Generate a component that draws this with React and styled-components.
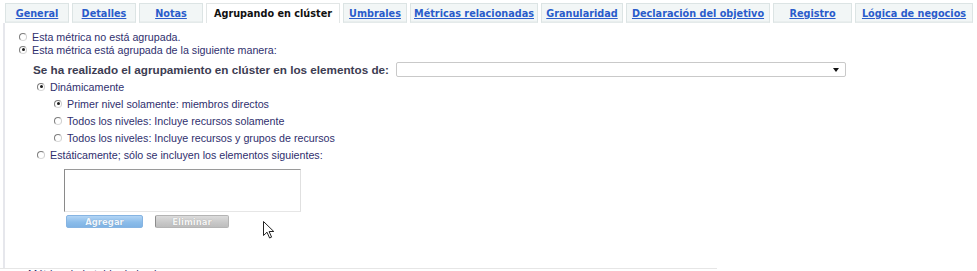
import React from 'react';
import styled, { createGlobalStyle } from 'styled-components';

const GlobalStyle = createGlobalStyle`
  body {
    margin: 0;
    background: #fff;
    font-family: "Liberation Sans", Arial, sans-serif;
  }
`;

const tabs = [
  { label: 'General', width: 64 },
  { label: 'Detalles', width: 64 },
  { label: 'Notas', width: 64 },
  { label: 'Agrupando en clúster', width: 134, active: true },
  { label: 'Umbrales', width: 64 },
  { label: 'Métricas relacionadas', width: 128 },
  { label: 'Granularidad', width: 82 },
  { label: 'Declaración del objetivo', width: 144 },
  { label: 'Registro', width: 79 },
  { label: 'Lógica de negocios', width: 118 },
];

const levels = [
  { label: 'Primer nivel solamente: miembros directos', checked: true },
  { label: 'Todos los niveles: Incluye recursos solamente' },
  { label: 'Todos los niveles: Incluye recursos y grupos de recursos' },
];

const Page = styled.div`
  position: relative;
  width: 977px;
  height: 271px;
  overflow: hidden;
`;

const TabBar = styled.div`
  display: flex;
  gap: 3px;
  padding: 3px 0 0 5px;
  height: 20px;
`;

const Tab = styled.div`
  box-sizing: border-box;
  width: ${p => p.width}px;
  height: 20px;
  display: flex;
  align-items: center;
  justify-content: center;
  border: 1px solid ${p => (p.active ? '#e2e6e6' : '#dce4e4')};
  border-bottom: ${p => (p.active ? 'none' : '1px solid #e4eaea')};
  background: ${p => (p.active ? '#fff' : '#f2f6f6')};
  box-shadow: ${p => (p.active ? 'none' : 'inset 0 -1px 0 #e9eeee')};
  font-family: "DejaVu Sans", Verdana, sans-serif;
  font-weight: bold;
  font-size: 9.7px;
  color: ${p => (p.active ? '#111' : '#2a5ccb')};
  text-decoration: ${p => (p.active ? 'none' : 'underline')};
  white-space: nowrap;
`;

const Panel = styled.div`
  box-sizing: border-box;
  height: 245px;
  margin-left: 3px;
  padding-top: 7px;
  border-left: 2px solid #e6e7ec;
`;

const OptionRow = styled.div`
  display: flex;
  align-items: center;
  gap: 5px;
  height: ${p => p.h || 17}px;
  padding-left: ${p => p.indent}px;
  font-size: 10.7px;
  color: #2f2f6e;
  white-space: nowrap;
`;

const Radio = styled.span`
  position: relative;
  box-sizing: border-box;
  width: 8px;
  height: 8px;
  border-radius: 50%;
  border: 1px solid;
  border-color: #7d7d7d #cfcfcf #d8d8d8 #7d7d7d;
  background: #fff;
  flex: none;

  &::after {
    content: '';
    display: ${p => (p.checked ? 'block' : 'none')};
    position: absolute;
    left: 1.5px;
    top: 1.5px;
    width: 3px;
    height: 3px;
    border-radius: 50%;
    background: #1d1d1d;
  }
`;

const ClusterRow = styled.div`
  display: flex;
  align-items: center;
  gap: 7px;
  height: 15px;
  margin-top: 6px;
  margin-bottom: 1px;
  padding-left: 28px;
`;

const ClusterLabel = styled.span`
  font-weight: bold;
  font-size: 11.7px;
  color: #3c3c52;
  white-space: nowrap;
`;

const Select = styled.div`
  box-sizing: border-box;
  width: 450px;
  height: 15px;
  border: 1px solid #c9c9c9;
  border-radius: 2px;
  background: #fff;
  display: flex;
  align-items: center;
  justify-content: flex-end;
  padding-right: 6px;
`;

const Caret = styled.span`
  width: 0;
  height: 0;
  border-left: 3.5px solid transparent;
  border-right: 3.5px solid transparent;
  border-top: 4px solid #111;
`;

const ListBox = styled.div`
  box-sizing: border-box;
  width: 237px;
  height: 43px;
  margin: 6px 0 0 59px;
  border: 1px solid;
  border-color: #9a9a9a #e0e0e0 #e6e6e6 #8a8a8a;
  background: #fff;
`;

const ButtonRow = styled.div`
  display: flex;
  gap: 12px;
  margin: 3px 0 0 61px;
`;

const Button = styled.div`
  box-sizing: border-box;
  width: ${p => p.width}px;
  height: 13px;
  display: flex;
  align-items: center;
  justify-content: center;
  border-radius: 2px;
  font-family: "DejaVu Sans", Verdana, sans-serif;
  font-weight: bold;
  font-size: 8.5px;
  color: ${p => (p.primary ? '#eef6ff' : '#f4f4f4')};
  border: 1px solid ${p => (p.primary ? '#86b4e2' : '#b4b4b4')};
  border-left-color: ${p => (p.primary ? '#86b4e2' : '#8c8c8c')};
  background: ${p =>
    p.primary
      ? 'linear-gradient(#b3d5f5, #8cbdea 55%, #7fb3e4)'
      : 'linear-gradient(#dcdcdc, #c9c9c9 55%, #bdbdbd)'};
  text-shadow: 0 0 1px rgba(0, 0, 0, 0.25);
`;

const Footer = styled.div`
  width: 717px;
  border-top: 1px solid #e6e6e6;
  padding: 0 0 0 28px;
  box-sizing: border-box;
  font-size: 11px;
  line-height: 11px;
  color: #2f2f6e;
  white-space: nowrap;
`;

const Cursor = styled.svg`
  position: absolute;
  left: 263px;
  top: 221px;
`;

export default function App() {
  return (
    <Page>
      <GlobalStyle />
      <TabBar>
        {tabs.map(t => (
          <Tab key={t.label} width={t.width} active={t.active}>
            {t.label}
          </Tab>
        ))}
      </TabBar>
      <Panel>
        <OptionRow indent={14} h={13}>
          <Radio />
          Esta métrica no está agrupada.
        </OptionRow>
        <OptionRow indent={14} h={13}>
          <Radio checked />
          Esta métrica está agrupada de la siguiente manera:
        </OptionRow>
        <ClusterRow>
          <ClusterLabel>Se ha realizado el agrupamiento en clúster en los elementos de:</ClusterLabel>
          <Select>
            <Caret />
          </Select>
        </ClusterRow>
        <OptionRow indent={32}>
          <Radio checked />
          Dinámicamente
        </OptionRow>
        {levels.map(l => (
          <OptionRow key={l.label} indent={49}>
            <Radio checked={l.checked} />
            {l.label}
          </OptionRow>
        ))}
        <OptionRow indent={32}>
          <Radio />
          Estáticamente; sólo se incluyen los elementos siguientes:
        </OptionRow>
        <ListBox />
        <ButtonRow>
          <Button primary width={77}>Agregar</Button>
          <Button width={74}>Eliminar</Button>
        </ButtonRow>
      </Panel>
      <Footer>Métrica de la tabla de hechos</Footer>
      <Cursor width="12" height="18" viewBox="0 0 12 18">
        <path d="M0.5 0.5 L0.5 14.5 L4 11.2 L6.6 17 L8.6 16.1 L6.1 10.5 L10.8 10.5 Z" fill="#fff" stroke="#222" strokeWidth="1" strokeLinejoin="round" />
      </Cursor>
    </Page>
  );
}
